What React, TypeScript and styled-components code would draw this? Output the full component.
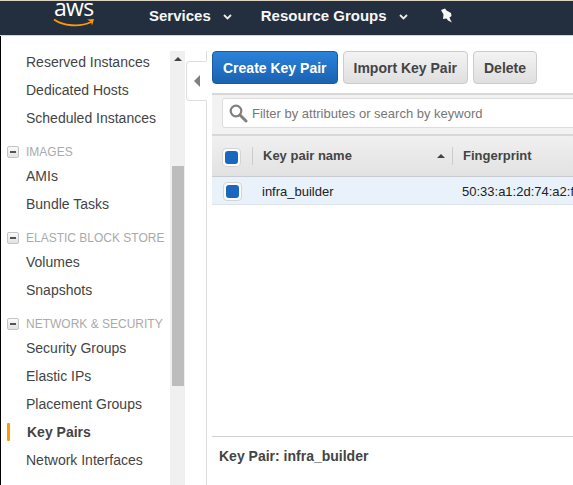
import React from 'react';
import styled, { createGlobalStyle } from 'styled-components';

const GlobalStyle = createGlobalStyle`
  html, body {
    margin: 0;
    padding: 0;
    background: #fff;
    overflow: hidden;
  }
  * {
    box-sizing: border-box;
  }
`;

const Page = styled.div`
  width: 573px;
  height: 485px;
  overflow: hidden;
  display: flex;
  flex-direction: column;
  font-family: "Liberation Sans", Arial, sans-serif;
  color: #444;
`;

const TopBar = styled.header`
  height: 36px;
  flex: none;
  display: flex;
  align-items: flex-start;
  background: #232f3e;
  border-top: 1px solid #dcd3c3;
  border-bottom: 1px solid #d5d5d5;
  color: #fff;
`;

const Logo = styled.svg`
  margin-left: 53px;
  flex: none;
`;

const NavItem = styled.div<{ $gap: number }>`
  display: flex;
  align-items: center;
  height: 29px;
  margin-left: ${p => p.$gap}px;
  font-size: 15px;
  font-weight: bold;
  color: #f4f6f8;
`;

const Chevron = styled.svg`
  margin-left: 12px;
  margin-top: 3px;
`;

const PinIcon = styled.svg`
  margin-left: 32px;
  margin-top: 7px;
  flex: none;
`;

const Body = styled.div`
  flex: 1;
  display: flex;
  min-height: 0;
  border-left: 1px solid #000;
`;

const Sidebar = styled.nav`
  width: 169px;
  flex: none;
  padding-top: 12px;
`;

const NavLink = styled.div<{ $active?: boolean }>`
  position: relative;
  height: 28px;
  line-height: 28px;
  padding-left: ${p => (p.$active ? 26 : 25)}px;
  font-size: 14px;
  white-space: nowrap;
  font-weight: ${p => (p.$active ? 'bold' : 'normal')};
  color: #444;
`;

const ActiveMark = styled.span`
  position: absolute;
  left: 6px;
  top: 5px;
  width: 3px;
  height: 18px;
  background: #f90;
  border-radius: 1px;
`;

const GroupHeading = styled.div`
  display: flex;
  align-items: center;
  height: 30px;
  padding: 10px 0 0 6px;
  font-size: 12px;
  white-space: nowrap;
  color: #aaa;
`;

const Collapse = styled.span`
  width: 12px;
  height: 12px;
  margin-right: 7px;
  display: flex;
  align-items: center;
  justify-content: center;
  border: 1px solid #c4c4c4;
  border-radius: 2px;
  background: linear-gradient(#fafafa, #e2e2e2);
  &::after {
    content: '';
    width: 6px;
    height: 2px;
    background: #555;
  }
`;

const ScrollTrack = styled.div`
  width: 15px;
  flex: none;
  background: #f0f0f0;
  margin-top: 15px;
  padding: 0 1px 0 2px;
`;

const ScrollArrow = styled.div`
  width: 0;
  height: 0;
  margin: 6px 0 0 2px;
  border-left: 4px solid transparent;
  border-right: 4px solid transparent;
  border-bottom: 4px solid #444;
`;

const ScrollThumb = styled.div`
  height: 220px;
  margin-top: 105px;
  background: #bdbdbd;
`;

const Divider = styled.div`
  width: 22px;
  flex: none;
  margin-top: 15px;
  border-right: 1px solid #dedede;
  padding-top: 10px;
`;

const ToggleTab = styled.div`
  width: 21px;
  height: 40px;
  margin-left: 1px;
  display: flex;
  align-items: center;
  justify-content: center;
  background: #fff;
  border: 1px solid #dedede;
  border-right: 1px solid #fff;
  border-radius: 4px 0 0 4px;
  &::after {
    content: '';
    width: 0;
    height: 0;
    border-top: 6px solid transparent;
    border-bottom: 6px solid transparent;
    border-right: 6px solid #808080;
  }
`;

const Main = styled.main`
  flex: 1;
  min-width: 0;
  display: flex;
  flex-direction: column;
  overflow: hidden;
`;

const Toolbar = styled.div`
  display: flex;
  gap: 5px;
  padding: 15px 0 0 5px;
  height: 57px;
  flex: none;
`;

const Button = styled.button<{ $primary?: boolean }>`
  height: 33px;
  padding: 0 10px;
  border-radius: 4px;
  font-family: inherit;
  font-size: 14px;
  font-weight: bold;
  white-space: nowrap;
  border: 1px solid ${p => (p.$primary ? '#1a5a9e' : '#ccc')};
  color: ${p => (p.$primary ? '#fff' : '#444')};
  background: ${p =>
    p.$primary
      ? 'linear-gradient(#2b82d9, #1a62b2)'
      : 'linear-gradient(#f3f3f3, #dfdfdf)'};
`;

const FilterBar = styled.div`
  margin-left: 5px;
  height: 41px;
  flex: none;
  padding: 3px 0 0 10px;
  background: #f2f2f2;
  border-top: 2px solid #d8d8d8;
`;

const FilterInput = styled.div`
  width: 420px;
  height: 30px;
  display: flex;
  align-items: center;
  gap: 4px;
  padding-left: 6px;
  background: #fff;
  border: 1px solid #ddd;
  border-radius: 3px;
  font-size: 13px;
  color: #777;
  white-space: nowrap;
`;

const TableHead = styled.div`
  margin-left: 5px;
  height: 43px;
  flex: none;
  display: flex;
  align-items: center;
  background: linear-gradient(#f0f0f0, #e2e2e2);
  border-top: 2px solid #d8d8d8;
  border-bottom: 1px solid #c8ccd0;
  font-size: 13px;
  font-weight: bold;
  white-space: nowrap;
`;

const TableRow = styled.div`
  margin-left: 5px;
  height: 28px;
  padding-top: 1px;
  flex: none;
  display: flex;
  align-items: center;
  background: #e9f1fb;
  border-bottom: 1px solid #dde3ea;
  font-size: 13px;
  color: #222;
  white-space: nowrap;
`;

const CheckWrap = styled.span<{ $head?: boolean }>`
  width: ${p => (p.$head ? 40 : 50)}px;
  flex: none;
  display: flex;
  padding-left: ${p => (p.$head ? 10 : 11)}px;
  padding-top: ${p => (p.$head ? 2 : 0)}px;
`;

const Check = styled.span`
  width: 19px;
  height: 19px;
  display: flex;
  align-items: center;
  justify-content: center;
  border: 1px solid #d4d4d4;
  border-radius: 4px;
  background: #fbfbfb;
  &::after {
    content: '';
    width: 13px;
    height: 13px;
    border-radius: 3px;
    background: #1a67bd;
  }
`;

const HeadCell = styled.span<{ $width?: number }>`
  position: relative;
  ${p => (p.$width ? `width: ${p.$width}px; flex: none;` : '')}
  padding-left: 11px;
  line-height: 18px;
  &::before {
    content: '';
    position: absolute;
    left: 0;
    top: 0;
    width: 1px;
    height: 18px;
    background: #ccc;
  }
`;

const SortUp = styled.span`
  position: absolute;
  right: 7px;
  top: 7px;
  border-left: 4px solid transparent;
  border-right: 4px solid transparent;
  border-bottom: 4px solid #444;
`;

const NameCell = styled.span`
  width: 200px;
  flex: none;
`;

const Spacer = styled.div`
  flex: 1;
`;

const DetailPane = styled.div`
  margin-left: 5px;
  height: 49px;
  flex: none;
  border-top: 1px solid #d0d0d0;
  padding: 10px 0 0 7px;
  font-size: 14px;
  line-height: 18px;
  font-weight: bold;
  white-space: nowrap;
`;

const GROUPS: { heading?: string; links: string[] }[] = [
  { links: ['Reserved Instances', 'Dedicated Hosts', 'Scheduled Instances'] },
  { heading: 'IMAGES', links: ['AMIs', 'Bundle Tasks'] },
  { heading: 'ELASTIC BLOCK STORE', links: ['Volumes', 'Snapshots'] },
  {
    heading: 'NETWORK & SECURITY',
    links: ['Security Groups', 'Elastic IPs', 'Placement Groups', 'Key Pairs', 'Network Interfaces'],
  },
];

const DownChevron = () => (
  <Chevron width="9" height="6" viewBox="0 0 9 6">
    <path d="M1 1l3.5 3.5L8 1" fill="none" stroke="#e8eaec" strokeWidth="1.8" />
  </Chevron>
);

export default function App() {
  return (
    <Page>
      <GlobalStyle />
      <TopBar>
        <Logo width="42" height="27" viewBox="0 0 42 27">
          <text x="1" y="14.5" fill="#fff" fontFamily="'Open Sans', sans-serif" fontSize="23" letterSpacing="-0.7">
            aws
          </text>
          <path d="M1 18.5C10 25 27 26.5 38 21" fill="none" stroke="#f90" strokeWidth="1.8" />
          <path d="M34 18.5L41 18 39 24.5 38 20.8z" fill="#f90" />
        </Logo>
        <NavItem $gap={54}>
          Services
          <DownChevron />
        </NavItem>
        <NavItem $gap={29}>
          Resource Groups
          <DownChevron />
        </NavItem>
        <PinIcon width="13" height="15" viewBox="0 0 13 15">
          <path d="M1 2L5 0.5 6.5 2.5 11 5 11.5 8 9.5 9.5 10.5 12 12 14.5 8 12.5 6.5 10.5 3 11 3.5 6.5z" fill="#f6f6f6" />
        </PinIcon>
      </TopBar>
      <Body>
        <Sidebar>
          {GROUPS.map(group => (
            <div key={group.links[0]}>
              {group.heading && (
                <GroupHeading>
                  <Collapse />
                  {group.heading}
                </GroupHeading>
              )}
              {group.links.map(link => (
                <NavLink key={link} $active={link === 'Key Pairs'}>
                  {link === 'Key Pairs' && <ActiveMark />}
                  {link}
                </NavLink>
              ))}
            </div>
          ))}
        </Sidebar>
        <ScrollTrack>
          <ScrollArrow />
          <ScrollThumb />
        </ScrollTrack>
        <Divider>
          <ToggleTab />
        </Divider>
        <Main>
          <Toolbar>
            <Button $primary>Create Key Pair</Button>
            <Button>Import Key Pair</Button>
            <Button>Delete</Button>
          </Toolbar>
          <FilterBar>
            <FilterInput>
              <svg width="19" height="19" viewBox="0 0 19 19">
                <circle cx="7" cy="7" r="5.3" fill="none" stroke="#808080" strokeWidth="2.2" />
                <path d="M11 11L17 17" stroke="#808080" strokeWidth="3" strokeLinecap="round" />
              </svg>
              Filter by attributes or search by keyword
            </FilterInput>
          </FilterBar>
          <TableHead>
            <CheckWrap $head>
              <Check />
            </CheckWrap>
            <HeadCell $width={200}>
              Key pair name
              <SortUp />
            </HeadCell>
            <HeadCell>Fingerprint</HeadCell>
          </TableHead>
          <TableRow>
            <CheckWrap>
              <Check />
            </CheckWrap>
            <NameCell>infra_builder</NameCell>
            <span>50:33:a1:2d:74:a2:f</span>
          </TableRow>
          <Spacer />
          <DetailPane>Key Pair: infra_builder</DetailPane>
        </Main>
      </Body>
    </Page>
  );
}
